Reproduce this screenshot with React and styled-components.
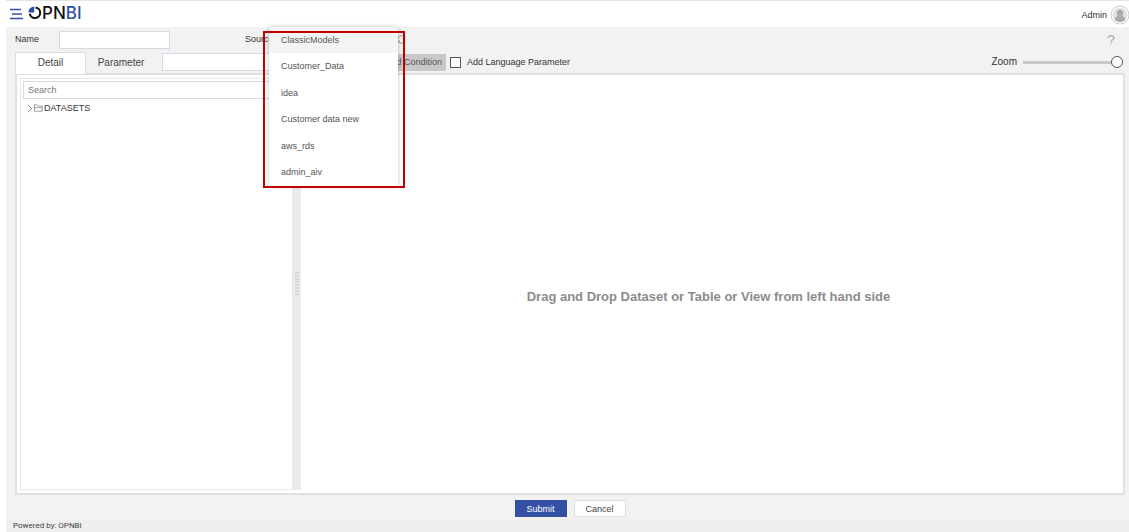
import React, { useState } from "react";
import styled, { createGlobalStyle } from "styled-components";

const GlobalStyle = createGlobalStyle`
  * { box-sizing: border-box; }
  body {
    margin: 0;
    background: #fff;
    color: #333;
    font: 9px/12px "Liberation Sans", Arial, sans-serif;
  }
  button, input, select { font: inherit; color: inherit; margin: 0; }
`;

const Page = styled.div`
  min-height: 100vh;
  padding-left: 6px;
  display: flex;
  flex-direction: column;
`;

const Header = styled.header`
  height: 27px;
  border-top: 1px solid #e4e4e4;
  display: flex;
  align-items: center;
  justify-content: space-between;
  padding-left: 4px;
`;

const Brand = styled.div`
  display: flex;
  align-items: center;
`;

const IconButton = styled.button`
  border: 0;
  padding: 0;
  background: none;
  display: flex;
  align-items: center;
`;

const Logo = styled.a`
  display: flex;
  align-items: center;
  margin-left: 5px;
  padding-bottom: 2px;
  font-family: Inter, "Liberation Sans", sans-serif;
  font-size: 17px;
  font-weight: 500;
  line-height: 20px;
  color: #111;
  text-decoration: none;
`;

const LogoAccent = styled.span`
  color: #2f4da6;
`;

const User = styled.div`
  display: flex;
  align-items: center;
  gap: 3px;
  padding-top: 1px;
`;

const Main = styled.main`
  flex: 1;
  display: flex;
  flex-direction: column;
  padding: 0 4px 0 9px;
  background: #f2f2f2;
`;

const FieldRow = styled.div`
  height: 25px;
  display: flex;
  align-items: center;
`;

const FieldLabel = styled.label`
  width: ${(p) => p.$width};
  padding-bottom: 2px;
`;

const TextInput = styled.input`
  width: ${(p) => p.$width};
  height: 18px;
  padding: 0 4px;
  border: 1px solid #d3dae6;
  background: #fff;
  outline: 0;
  &::placeholder { color: #777; opacity: 1; }
`;

const SourceField = styled.div`
  position: relative;
  display: flex;
  align-items: center;
  margin-left: 75px;
`;

const SourceSelect = styled.select`
  width: 118px;
  height: 18px;
  border: 1px solid #d3dae6;
  background: #fff;
`;

const Menu = styled.ul`
  position: absolute;
  z-index: 2;
  top: -4px;
  left: 24px;
  width: 129px;
  height: 159px;
  margin: 0;
  padding: 0;
  list-style: none;
  display: flex;
  flex-direction: column;
  background: #fff;
  box-shadow: 0 0 4px rgba(0, 0, 0, 0.25);
`;

const MenuItem = styled.li`
  flex: 1;
  display: flex;
`;

const MenuButton = styled.button`
  flex: 1;
  border: 0;
  padding: 0 12px;
  text-align: left;
  color: #555;
  background: ${(p) => (p.$active ? "#f4f4f4" : "#fff")};
`;

const Highlight = styled.div`
  position: absolute;
  z-index: 3;
  top: 0;
  left: 18px;
  width: 142px;
  height: 157px;
  border: 2px solid #c00000;
  pointer-events: none;
`;

const Push = styled.div`
  margin-left: auto;
  display: flex;
  align-items: center;
  gap: 6px;
  padding-right: ${(p) => p.$right || "0"};
`;

const TabRow = styled.div`
  height: 21px;
  display: flex;
  align-items: center;
  padding-bottom: 1px;
`;

const Tab = styled.button`
  height: 22px;
  align-self: flex-start;
  width: ${(p) => p.$width};
  padding: 0 0 2px;
  font-size: 10px;
  color: #444;
  border: 1px solid ${(p) => (p.$active ? "#ddd" : "transparent")};
  border-bottom: 0;
  background: ${(p) => (p.$active ? "#fff" : "transparent")};
  position: relative;
  z-index: 1;
`;

const ParameterField = styled.div`
  display: flex;
  margin-left: 6px;
`;

const ConditionButton = styled.button`
  width: 76px;
  height: 17px;
  padding: 0 4px;
  border: 0;
  text-align: right;
  color: #555;
  background: #c8c8c8;
`;

const CheckLabel = styled.label`
  display: flex;
  align-items: center;
  gap: 6px;
  margin-left: 4px;
`;

const CheckBox = styled.input`
  appearance: none;
  width: 11px;
  height: 11px;
  border: 1px solid #555;
  background: #fff;
  &:checked { background: #2f4da6; }
`;

const ZoomLabel = styled.label`
  font-size: 10px;
`;

const Slider = styled.input`
  appearance: none;
  width: 100px;
  height: 12px;
  background: transparent;
  &::-webkit-slider-runnable-track {
    height: 3px;
    background: #c8c8c8;
  }
  &::-webkit-slider-thumb {
    appearance: none;
    width: 12px;
    height: 12px;
    margin-top: -5px;
    border: 1px solid #555;
    border-radius: 50%;
    background: #fff;
  }
`;

const Workspace = styled.section`
  flex: 1;
  display: flex;
  border: 2px solid #e0e0e0;
  background: #fff;
  padding: 3px;
`;

const Sidebar = styled.aside`
  width: 273px;
  border: 1px solid #e8e8e8;
  padding: 2px;
`;

const Tree = styled.ul`
  margin: 0;
  padding: 3px 4px;
  list-style: none;
`;

const TreeNode = styled.button`
  border: 0;
  padding: 0;
  background: none;
  display: flex;
  align-items: center;
  gap: 1px;
`;

const Splitter = styled.div`
  width: 8px;
  background: #ebebeb;
  display: flex;
  align-items: center;
  justify-content: center;
`;

const Canvas = styled.div`
  flex: 1;
  display: flex;
  align-items: center;
  justify-content: center;
  padding: 26px 4px 0 0;
`;

const Hint = styled.p`
  margin: 0;
  font-size: 13px;
  line-height: 16px;
  font-weight: bold;
  color: #8c8c8c;
`;

const Actions = styled.div`
  height: 24px;
  display: flex;
  justify-content: center;
  align-items: flex-start;
  gap: 7px;
  padding-top: 5px;
`;

const ActionButton = styled.button`
  width: 52px;
  height: 17px;
  padding: 0;
  border: 1px solid ${(p) => (p.$primary ? "#3450a4" : "#ddd")};
  background: ${(p) => (p.$primary ? "#3450a4" : "#fff")};
  color: ${(p) => (p.$primary ? "#fff" : "#444")};
`;

const Footer = styled.footer`
  height: 13px;
  padding: 1px 0 0 7px;
  background: #efefef;
  font-family: Roboto, sans-serif;
  font-size: 8px;
  color: #444;
`;

const sources = ["ClassicModels", "Customer_Data", "idea", "Customer data new", "aws_rds", "admin_aiv"];

const MenuIcon = () => (
  <svg width="13" height="12" viewBox="0 0 13 12" stroke="#3450a4" fill="none">
    <path d="M0 1.500h11M2 6h10M0 10.500h13" strokeWidth="1.500" />
  </svg>
);

const LogoMark = () => (
  <svg width="14" height="14" viewBox="0 0 14 14" fill="none">
    <path d="M7.500 1.500A5.300 5.300 0 1 1 1.700 7.800" stroke="#111" strokeWidth="2" />
    <path d="M6.200 6.400V.6A6 6 0 0 0 .4 6.400z" fill="#2f4da6" />
  </svg>
);

const Avatar = () => (
  <svg width="19" height="20" viewBox="0 0 19 20">
    <circle cx="10" cy="10" r="9" fill="#fff" stroke="#ccc" />
    <circle cx="10" cy="10" r="7.500" fill="#e4e4e4" />
    <circle cx="10" cy="8" r="3.200" fill="#aaa" />
    <path d="M5 15c0-4 2-4 5-4s5 0 5 4c-2 2.500-8 2.500-10 0z" fill="#aaa" />
  </svg>
);

const RefreshIcon = () => (
  <svg width="9" height="9" viewBox="0 0 9 9" fill="none" stroke="#888" strokeWidth=".8">
    <path d="M.8 4a3.500 3.500 0 0 1 6.500-1.500M7.800.8v2.200H5.600M8 5a3.500 3.500 0 0 1-6.500 1.500M.9 8.200V6h2.200" />
  </svg>
);

const ChevronIcon = () => (
  <svg width="6" height="9" viewBox="0 0 6 9" fill="none" stroke="#777" strokeWidth=".8">
    <path d="M.8.8l4 3.700-4 3.700" />
  </svg>
);

const FolderIcon = () => (
  <svg width="9" height="8" viewBox="0 0 9 8" fill="none" stroke="#888">
    <path d="M.5 7.200V.8h2.800l1 1.200h4v5.200H.5M.8 3.600h7.400" strokeWidth=".8" />
  </svg>
);

const GripIcon = () => (
  <svg width="4" height="24" viewBox="0 0 4 24" stroke="#c4c4c4" strokeDasharray="2 1">
    <path d="M1 0v24M3 0v24" strokeWidth="1" />
  </svg>
);

export default function App() {
  const [source, setSource] = useState(sources[0]);
  const [zoom, setZoom] = useState(100);
  return (
    <Page>
      <GlobalStyle />
      <Header>
        <Brand>
          <IconButton aria-label="Open menu"><MenuIcon /></IconButton>
          <Logo href="#">
            <LogoMark />
            <span>PN<LogoAccent>BI</LogoAccent></span>
          </Logo>
        </Brand>
        <User>Admin <Avatar /></User>
      </Header>
      <Main>
        <FieldRow>
          <FieldLabel htmlFor="name" $width="44px">Name</FieldLabel>
          <TextInput id="name" $width="111px" />
          <SourceField>
            <FieldLabel htmlFor="source" $width="34px">Source</FieldLabel>
            <SourceSelect id="source" value={source} onChange={(e) => setSource(e.target.value)}>
              {sources.map((s) => <option key={s}>{s}</option>)}
            </SourceSelect>
            <IconButton aria-label="Refresh sources"><RefreshIcon /></IconButton>
            <Menu>
              {sources.map((s) => (
                <MenuItem key={s}>
                  <MenuButton $active={s === source} onClick={() => setSource(s)}>{s}</MenuButton>
                </MenuItem>
              ))}
            </Menu>
            <Highlight />
          </SourceField>
          <Push $right="10px">
            <IconButton aria-label="Help">
              <svg width="8" height="10" viewBox="0 0 8 10" fill="none" stroke="#888">
                <path d="M1 3c0-3 6-3 6 0 0 2-3 1.800-3 4M4 8.500v1" />
              </svg>
            </IconButton>
          </Push>
        </FieldRow>
        <TabRow>
          <Tab $active $width="71px">Detail</Tab>
          <Tab $width="70px">Parameter</Tab>
          <ParameterField>
            <TextInput $width="208px" aria-label="Parameter value" />
          </ParameterField>
          <ConditionButton>Add Condition</ConditionButton>
          <CheckLabel><CheckBox type="checkbox" />Add Language Parameter</CheckLabel>
          <Push $right="2px">
            <ZoomLabel htmlFor="zoom">Zoom</ZoomLabel>
            <Slider id="zoom" type="range" value={zoom} onChange={(e) => setZoom(e.target.value)} />
          </Push>
        </TabRow>
        <Workspace>
          <Sidebar>
            <TextInput $width="100%" placeholder="Search" aria-label="Search" />
            <Tree>
              <li><TreeNode><ChevronIcon /><FolderIcon />DATASETS</TreeNode></li>
            </Tree>
          </Sidebar>
          <Splitter><GripIcon /></Splitter>
          <Canvas><Hint>Drag and Drop Dataset or Table or View from left hand side</Hint></Canvas>
        </Workspace>
        <Actions>
          <ActionButton $primary>Submit</ActionButton>
          <ActionButton>Cancel</ActionButton>
        </Actions>
      </Main>
      <Footer>Powered by: OPNBI</Footer>
    </Page>
  );
}
